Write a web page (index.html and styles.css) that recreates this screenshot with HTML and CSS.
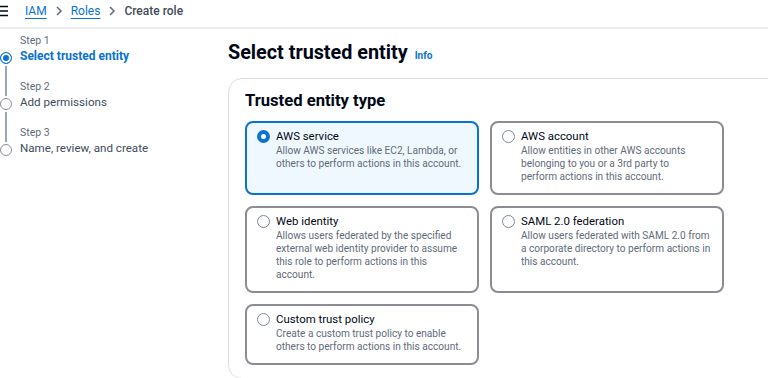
FILE: index.html
```html
<!DOCTYPE html>
<html lang="en">
<head>
<meta charset="utf-8">
<title>Create role</title>
<link rel="stylesheet" href="styles.css">
</head>
<body>
<header class="topbar">
  <svg class="menu" width="10" height="12" viewBox="0 0 10 12"><path d="M0 1.5h9M0 6h9M0 10.5h9" stroke="#000716" stroke-width="1.6" fill="none"/></svg>
  <nav class="crumbs">
    <a class="crumb-link" href="#">IAM</a>
    <svg class="chev" width="8" height="10" viewBox="0 0 8 10"><path d="M2 1l4 4-4 4" stroke="#5f6b7a" stroke-width="1.5" fill="none"/></svg>
    <a class="crumb-link" href="#">Roles</a>
    <svg class="chev" width="8" height="10" viewBox="0 0 8 10"><path d="M2 1l4 4-4 4" stroke="#5f6b7a" stroke-width="1.5" fill="none"/></svg>
    <span class="crumb-current">Create role</span>
  </nav>
</header>
<div class="layout">
  <aside class="steps">
    <div class="step">
      <div class="ind"><span class="line top hidden"></span><span class="dot active"></span><span class="line bottom"></span></div>
      <div class="step-text"><div class="step-num">Step 1</div><div class="step-title active">Select trusted entity</div></div>
    </div>
    <div class="step">
      <div class="ind"><span class="line top"></span><span class="dot"></span><span class="line bottom"></span></div>
      <div class="step-text"><div class="step-num">Step 2</div><div class="step-title">Add permissions</div></div>
    </div>
    <div class="step last">
      <div class="ind"><span class="line top"></span><span class="dot"></span><span class="line bottom hidden"></span></div>
      <div class="step-text"><div class="step-num">Step 3</div><div class="step-title">Name, review, and create</div></div>
    </div>
  </aside>
  <main class="main">
    <h1 class="page-title"><span>Select trusted entity</span><a class="info" href="#">Info</a></h1>
    <section class="card">
      <h2 class="card-title">Trusted entity type</h2>
      <div class="tiles">
        <label class="tile selected">
          <span class="radio on"></span>
          <span class="tile-text"><span class="tile-title">AWS service</span><span class="tile-desc">Allow AWS services like EC2, Lambda, or others to perform actions in this account.</span></span>
        </label>
        <label class="tile">
          <span class="radio"></span>
          <span class="tile-text"><span class="tile-title">AWS account</span><span class="tile-desc">Allow entities in other AWS accounts belonging to you or a 3rd party to<br>perform actions in this account.</span></span>
        </label>
        <label class="tile">
          <span class="radio"></span>
          <span class="tile-text"><span class="tile-title">Web identity</span><span class="tile-desc">Allows users federated by the specified external web identity provider to assume this role to perform actions in this account.</span></span>
        </label>
        <label class="tile">
          <span class="radio"></span>
          <span class="tile-text"><span class="tile-title">SAML 2.0 federation</span><span class="tile-desc">Allow users federated with SAML 2.0 from a corporate directory to perform actions in this account.</span></span>
        </label>
        <label class="tile">
          <span class="radio"></span>
          <span class="tile-text"><span class="tile-title">Custom trust policy</span><span class="tile-desc">Create a custom trust policy to enable others to perform actions in this account.</span></span>
        </label>
      </div>
    </section>
  </main>
</div>
</body>
</html>
```
FILE: styles.css
```css
* { box-sizing: border-box; }
html, body { margin: 0; padding: 0; }
body {
  width: 768px;
  height: 378px;
  overflow: hidden;
  background: #fff;
  color: #000716;
  font-family: Roboto, "Open Sans", sans-serif;
}
.topbar {
  height: 29px;
  display: flex;
  align-items: center;
  border-bottom: 2px solid #e9ebed;
  padding-bottom: 5px;
}
.menu { margin-left: -1px; display: block; }
.crumbs {
  display: flex;
  align-items: center;
  margin-left: 16px;
  font-size: 12px;
}
.crumb-link {
  color: #0972d3;
  text-decoration: underline;
  text-underline-offset: 3px;
}
.chev { margin: 0 8px 0 8px; display: block; }
.crumb-current { color: #414d5c; font-weight: 500; }
.layout { display: flex; }
.steps {
  flex: 0 0 228px;
  padding-top: 5px;
  display: flex;
  flex-direction: column;
}
.step { display: flex; gap: 8px; }
.ind {
  width: 12px;
  display: flex;
  flex-direction: column;
  align-items: center;
}
.line { width: 1.5px; background: #9ba7b6; display: block; }
.line.top { height: 16px; }
.line.bottom { flex: 1; min-height: 14px; }
.line.hidden { background: transparent; }
.dot {
  width: 12px;
  height: 12px;
  border-radius: 50%;
  border: 1.5px solid #8c8c94;
  background: #fff;
  display: block;
  margin: 2px 0;
}
.dot.active {
  border: 1.5px solid #0972d3;
  background: #0972d3;
  box-shadow: inset 0 0 0 2px #fff;
}
.step-text { padding-bottom: 14px; }
.step.last .step-text { padding-bottom: 0; }
.step-num { font-size: 10.5px; line-height: 14px; color: #5f6b7a; }
.step-title { font-size: 11.6px; line-height: 16px; color: #414d5c; }
.step-title.active { color: #0972d3; font-weight: 700; font-size: 12px; }
.main { flex: 0 0 600px; }
.page-title {
  display: flex;
  align-items: baseline;
  gap: 7px;
  margin: 12px 0 13px 0;
  height: 24px;
  font-size: 19.8px;
  line-height: 24px;
  font-weight: 700;
}
.info {
  font-size: 10px;
  font-weight: 700;
  color: #0972d3;
  text-decoration: none;
}
.card {
  border: 1px solid #dcdfe3;
  border-radius: 14px;
  padding: 12px 16px 13px 16px;
}
.card-title {
  margin: 0 0 10px 0;
  font-size: 16.6px;
  line-height: 20px;
  font-weight: 700;
}
.tiles {
  display: grid;
  grid-template-columns: 234px 234px;
  gap: 11px;
}
.tile {
  display: flex;
  gap: 6px;
  border: 2px solid #8c8c94;
  border-radius: 8px;
  padding: 6px 10px 10px 10px;
  background: #fff;
}
.tile.selected { border-color: #0972d3; background: #f0f8ff; }
.radio {
  flex: 0 0 13px;
  width: 13px;
  height: 13px;
  margin-top: 1px;
  border-radius: 50%;
  border: 1.5px solid #7d8998;
  background: #fff;
}
.radio.on { border: 4px solid #0972d3; }
.tile-text { display: flex; flex-direction: column; }
.tile-title { font-size: 11.4px; line-height: 15px; }
.tile-desc { font-size: 10.1px; line-height: 13px; color: #5f6b7a; }
```
